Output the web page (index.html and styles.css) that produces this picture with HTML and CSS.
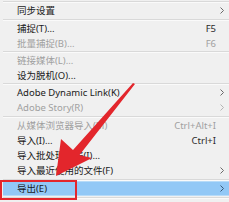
FILE: index.html
```html
<!DOCTYPE html>
<html>
<head>
<meta charset="utf-8">
<link rel="stylesheet" href="styles.css">
</head>
<body>
<div class="menu">
  <div class="sep s3"></div>
  <div class="item"><span class="label">同步设置</span><span class="key"></span><span class="chev"><svg width="4" height="7" viewBox="0 0 4 7"><polyline points="0.5,0.5 3.5,3.5 0.5,6.5"/></svg></span></div>
  <div class="sep s3"></div>
  <div class="item"><span class="label">捕捉(T)...</span><span class="key">F5</span><span class="chev"></span></div>
  <div class="item dis"><span class="label">批量捕捉(B)...</span><span class="key">F6</span><span class="chev"></span></div>
  <div class="sep s2"></div>
  <div class="item dis"><span class="label">链接媒体(L)...</span><span class="key"></span><span class="chev"></span></div>
  <div class="item"><span class="label">设为脱机(O)...</span><span class="key"></span><span class="chev"></span></div>
  <div class="sep s2"></div>
  <div class="item"><span class="label">Adobe Dynamic Link(K)</span><span class="key"></span><span class="chev"><svg width="4" height="7" viewBox="0 0 4 7"><polyline points="0.5,0.5 3.5,3.5 0.5,6.5"/></svg></span></div>
  <div class="item dis"><span class="label">Adobe Story(R)</span><span class="key"></span><span class="chev"><svg width="4" height="7" viewBox="0 0 4 7"><polyline points="0.5,0.5 3.5,3.5 0.5,6.5"/></svg></span></div>
  <div class="sep s3"></div>
  <div class="item dis"><span class="label">从媒体浏览器导入(M)</span><span class="key">Ctrl+Alt+I</span><span class="chev"></span></div>
  <div class="item"><span class="label">导入(I)...</span><span class="key">Ctrl+I</span><span class="chev"></span></div>
  <div class="item"><span class="label">导入批处理列表(I)...</span><span class="key"></span><span class="chev"></span></div>
  <div class="item"><span class="label">导入最近使用的文件(F)</span><span class="key"></span><span class="chev"><svg width="4" height="7" viewBox="0 0 4 7"><polyline points="0.5,0.5 3.5,3.5 0.5,6.5"/></svg></span></div>
  <div class="sep s3"></div>
  <div class="item active"><span class="label">导出(E)</span><span class="key"></span><span class="chev"><svg width="4" height="7" viewBox="0 0 4 7"><polyline points="0.5,0.5 3.5,3.5 0.5,6.5"/></svg></span></div>
  <div class="sep s3"></div>
  <div class="item"><span class="label"></span><span class="key"></span><span class="chev"><svg width="4" height="7" viewBox="0 0 4 7"><polyline points="0.5,0.5 3.5,3.5 0.5,6.5"/></svg></span></div>
</div>
<div class="callout"></div>
<svg class="arrow" width="229" height="202" viewBox="0 0 229 202">
  <polygon points="135,84 133,83 73,150 61,139 56,176 92,158 79.5,155"/>
</svg>
</body>
</html>
```

FILE: styles.css
```css
html, body {
  margin: 0;
  padding: 0;
}
body {
  width: 229px;
  height: 202px;
  overflow: hidden;
  background: #f0f0f0;
  position: relative;
  font-family: "Noto Sans", "Noto Sans CJK SC", sans-serif;
  font-size: 9.5px;
}
.menu {
  display: flex;
  flex-direction: column;
  padding-left: 3px;
}
.item {
  display: grid;
  grid-template-columns: 1fr auto 13px;
  align-items: center;
  height: 15px;
  padding-left: 14px;
  color: #1a1a1a;
  line-height: 15px;
  white-space: nowrap;
}
.item .key {
  text-align: right;
  color: #2a2a2a;
}
.item .chev {
  display: flex;
  align-items: center;
  justify-content: flex-start;
  padding-left: 4px;
}
.item .chev svg {
  display: block;
}
.item .chev polyline {
  fill: none;
  stroke: #6a6a6a;
  stroke-width: 1;
}
.item.dis {
  color: #a0a0a0;
}
.item.dis .key {
  color: #a0a0a0;
}
.item.dis .chev polyline {
  stroke: #b4b4b4;
}
.item.active {
  background: #92c8f6;
  box-shadow: inset 0 1px 0 #b7dbf8, inset 0 -1px 0 #b7dbf8;
  color: #1a1a1a;
}
.item.active .chev polyline {
  stroke: #3a5a78;
}
.sep {
  box-sizing: border-box;
  border-bottom: 1px solid #fafafa;
}
.sep::before {
  content: "";
  display: block;
  height: 1px;
  background: #d9d9d9;
}
.sep.s3 {
  height: 3px;
  padding-top: 1px;
}
.sep.s2 {
  height: 2px;
}
.callout {
  position: absolute;
  left: 0;
  top: 180px;
  width: 77px;
  height: 20px;
  box-sizing: border-box;
  border: 2.5px solid #e3262c;
}
.arrow {
  position: absolute;
  left: 0;
  top: 0;
}
.arrow polygon {
  fill: #e3262c;
}
```
